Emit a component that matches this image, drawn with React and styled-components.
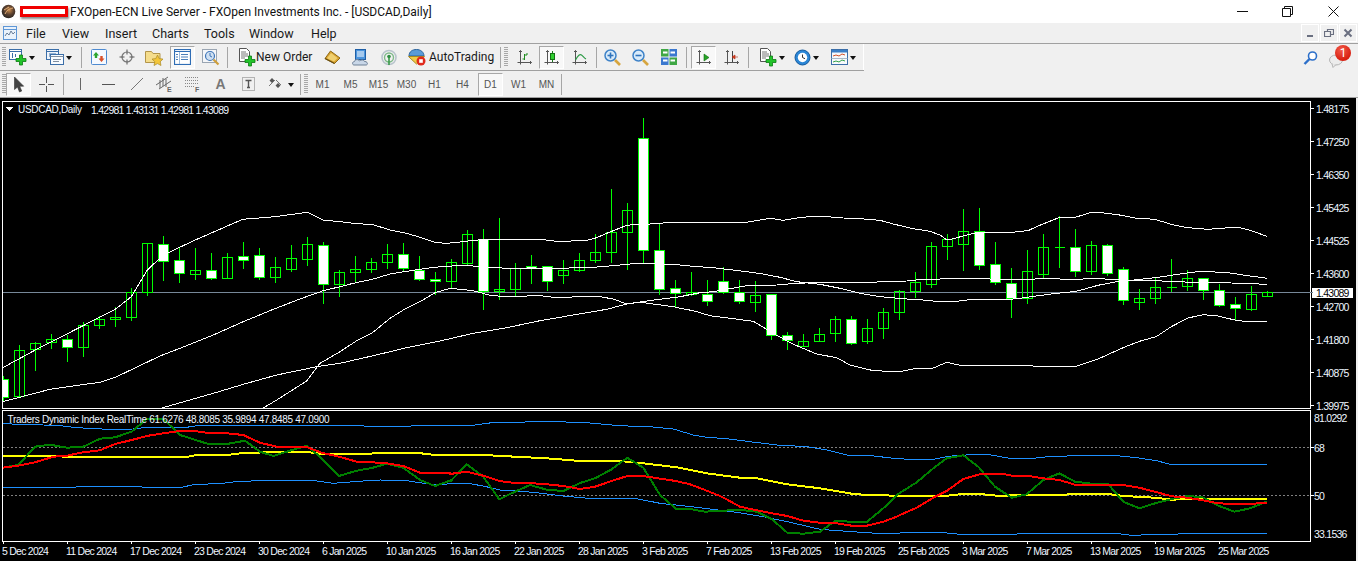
import React from 'react'
import styled, { createGlobalStyle } from 'styled-components'

const GlobalStyle = createGlobalStyle`
  html, body { margin: 0; padding: 0; background: #f0f0f0; overflow: hidden; }
  #root { width: 1358px; height: 561px; }
`

const UI_FONT = `Roboto, "Liberation Sans", sans-serif`
const CHART_FONT = `"Liberation Sans", Arial, sans-serif`

/* ---------- chart data (measured in thirds of a pixel, see at()) ---------- */

// high, body top, body bottom, low, white body
const CANDLES = [
  [825, 838, 892, 905, 1], [733, 751, 890, 890, 0], [723, 730, 748, 812, 0], [700, 719, 727, 746, 0],
  [703, 719, 742, 785, 1], [663, 676, 742, 770, 0], [646, 658, 676, 686, 0], [618, 652, 658, 678, 0],
  [562, 577, 652, 662, 0], [427, 430, 577, 585, 0], [406, 433, 484, 540, 1], [439, 482, 520, 548, 1],
  [441, 511, 523, 537, 0], [457, 511, 535, 539, 1], [457, 472, 535, 535, 0], [423, 469, 481, 506, 1],
  [441, 466, 532, 539, 1], [468, 502, 532, 548, 0], [433, 475, 508, 515, 0], [408, 433, 478, 497, 0],
  [423, 436, 553, 610, 1], [508, 517, 553, 590, 0], [465, 508, 517, 547, 0], [472, 487, 508, 518, 0],
  [430, 463, 487, 506, 0], [427, 463, 505, 510, 1], [465, 511, 538, 541, 1], [514, 538, 544, 584, 1],
  [475, 487, 544, 565, 0], [388, 403, 490, 496, 0], [385, 418, 575, 629, 1], [352, 568, 575, 598, 0],
  [487, 505, 568, 589, 0], [463, 499, 505, 551, 1], [496, 499, 544, 572, 1], [478, 511, 526, 551, 0],
  [457, 481, 511, 515, 0], [400, 457, 481, 488, 0], [265, 397, 457, 488, 0], [307, 331, 397, 509, 0],
  [52, 115, 451, 490, 1], [367, 451, 568, 584, 1], [538, 565, 580, 622, 1], [514, 577, 583, 587, 0],
  [538, 583, 604, 617, 1], [499, 544, 577, 580, 1], [538, 577, 604, 611, 1], [541, 586, 607, 635, 0],
  [583, 583, 706, 717, 1], [694, 706, 721, 749, 1], [700, 724, 739, 739, 0], [682, 703, 724, 724, 0],
  [646, 658, 700, 725, 0], [646, 658, 730, 734, 1], [655, 685, 724, 731, 0], [622, 637, 685, 716, 0],
  [568, 574, 637, 659, 0], [514, 547, 575, 593, 0], [424, 439, 553, 563, 0], [400, 418, 439, 479, 0],
  [325, 394, 433, 512, 0], [322, 394, 496, 509, 1], [424, 493, 547, 554, 1], [502, 550, 595, 653, 1],
  [448, 514, 594, 610, 0], [400, 442, 523, 532, 0], [346, 442, 442, 503, 0], [385, 442, 514, 530, 1],
  [421, 436, 514, 524, 0], [430, 436, 520, 527, 1], [499, 509, 601, 613, 1], [565, 595, 607, 629, 0],
  [532, 562, 595, 611, 0], [475, 562, 562, 575, 0], [508, 535, 559, 572, 0], [532, 535, 571, 599, 1],
  [550, 571, 616, 620, 1], [589, 613, 625, 660, 1], [556, 583, 628, 631, 0], [571, 577, 589, 590, 0],
]

const at = (x0, y0, pts) => pts.map(([x, y]) => [x0 + x / 3, y0 + y / 3])
const toPoints = pts => pts.map(([x, y]) => `${x.toFixed(1)},${y.toFixed(1)}`).join(' ')

const BAND_LINES = [
  [
    ...at(0, 100, [[8, 803], [106, 750], [346, 628], [394, 590], [442, 510], [490, 465], [586, 420], [682, 378], [728, 358], [824, 350], [922, 337], [970, 360], [1020, 365]]),
    ...at(340, 100, [[40, 370], [100, 374], [150, 390], [200, 400], [240, 412], [285, 427], [315, 430], [345, 428], [400, 421], [450, 418], [600, 418], [650, 424], [690, 424], [700, 421], [740, 421], [770, 413], [800, 400], [860, 376], [900, 372], [930, 372], [980, 368], [1020, 367]]),
    ...at(680, 100, [[200, 367], [240, 360], [270, 355], [310, 361], [350, 354], [400, 349], [440, 350], [490, 354], [540, 356], [600, 361], [640, 372], [700, 386], [750, 394], [780, 405], [800, 420], [820, 416], [850, 408], [880, 400], [920, 397], [1000, 397], [1020, 394]]),
    ...at(1018, 100, [[30, 392], [60, 378], [120, 354], [175, 351], [220, 337], [240, 337], [300, 344], [350, 354], [410, 358], [470, 376], [510, 383], [570, 388], [620, 384], [660, 382], [700, 392], [747, 409]]),
  ],
  [
    ...at(0, 100, [[8, 905], [150, 868], [240, 855], [300, 847], [350, 830], [480, 768], [540, 745], [640, 705], [730, 665], [820, 628], [900, 597], [970, 572], [1020, 560]]),
    ...at(340, 100, [[40, 550], [100, 537], [150, 522], [200, 514], [240, 508], [280, 502], [310, 500], [360, 496], [400, 498], [450, 502], [500, 505], [560, 505], [650, 507], [700, 503], [760, 502], [820, 497], [880, 491], [940, 490], [1020, 495]]),
    ...at(680, 100, [[40, 499], [100, 503], [200, 515], [250, 522], [300, 532], [350, 545], [420, 553], [480, 565], [540, 580], [600, 590], [680, 597], [730, 600], [780, 605], [820, 605], [860, 600], [1000, 597], [1020, 595]]),
    ...at(1018, 100, [[40, 590], [100, 582], [175, 574], [240, 556], [290, 546], [340, 541], [420, 532], [500, 520], [550, 514], [630, 518], [690, 527], [747, 535]]),
  ],
  [
    ...at(0, 100, [[485, 924], [640, 880], [730, 853], [830, 825], [950, 800], [1020, 790]]),
    ...at(340, 100, [[100, 767], [200, 743], [300, 723], [400, 700], [500, 683], [600, 662], [700, 645], [800, 628], [860, 612], [920, 603], [1020, 590]]),
    ...at(680, 100, [[60, 578], [100, 575], [150, 566], [200, 557], [290, 555], [350, 550], [400, 548], [580, 547], [600, 545], [680, 543], [730, 538], [830, 536], [1020, 538]]),
    ...at(1018, 100, [[100, 536], [150, 538], [240, 536], [330, 540], [400, 540], [440, 544], [560, 548], [640, 549], [747, 553]]),
  ],
  [
    ...at(0, 100, [[790, 924], [830, 900], [920, 843], [960, 790], [1020, 755]]),
    ...at(340, 100, [[50, 722], [95, 700], [150, 655], [195, 627], [240, 605], [285, 578], [330, 565], [400, 572], [450, 586], [500, 590], [550, 590], [570, 586], [600, 587], [650, 593], [690, 593], [700, 589], [780, 590], [820, 597], [860, 612], [900, 607], [940, 612], [1000, 620], [1020, 625]]),
    ...at(680, 100, [[40, 632], [90, 647], [150, 655], [220, 664], [250, 682], [290, 706], [340, 733], [410, 762], [470, 773], [510, 795], [580, 812], [660, 815], [700, 807], [760, 804], [800, 787], [840, 796], [1020, 796]]),
    ...at(1018, 100, [[60, 799], [175, 799], [240, 777], [320, 741], [370, 722], [415, 710], [460, 680], [510, 654], [555, 644], [600, 648], [650, 660], [680, 664], [747, 664]]),
  ],
]

const TDI_BLUE_TOP = [
  ...at(0, 405, [[8, 56], [130, 60], [180, 62], [230, 68], [325, 73], [400, 72], [440, 67], [560, 67], [590, 62], [1090, 62], [1095, 64], [1230, 64], [1235, 62], [1350, 62]]),
  ...at(450, 405, [[60, 62], [125, 53], [270, 50], [320, 50], [410, 53], [510, 62], [610, 66], [670, 72], [730, 90], [770, 97], [830, 101], [900, 110], [980, 120], [1070, 125], [1130, 135], [1200, 152], [1265, 152], [1330, 160]]),
  ...at(900, 405, [[25, 163], [100, 163], [135, 156], [170, 151], [260, 148], [330, 160], [400, 160], [455, 154], [550, 152], [650, 152], [710, 158], [770, 167], [810, 178], [1100, 178]]),
]
const TDI_BLUE_BOTTOM = [
  ...at(0, 405, [[8, 247], [225, 247], [230, 245], [420, 245], [440, 248], [545, 247], [580, 239], [670, 235], [705, 230], [800, 226], [935, 226], [1000, 235], [1090, 228], [1140, 225], [1220, 227], [1260, 233], [1310, 240], [1350, 236]]),
  ...at(450, 405, [[60, 236], [100, 243], [150, 255], [250, 262], [340, 273], [415, 280], [560, 281], [630, 295], [740, 307], [860, 322], [940, 335], [1020, 352], [1110, 373], [1190, 379], [1280, 385], [1340, 385]]),
  ...at(900, 405, [[25, 382], [120, 382], [170, 387], [350, 387], [360, 385], [645, 385], [695, 391], [790, 388], [935, 385], [1100, 385]]),
]
const TDI_YELLOW = [
  ...at(0, 405, [[8, 152], [160, 152], [200, 156], [560, 156], [590, 150], [680, 150], [730, 144], [830, 141], [920, 141], [960, 146], [1115, 146], [1120, 144], [1255, 144], [1305, 150], [1350, 150]]),
  ...at(450, 405, [[100, 150], [195, 155], [290, 160], [390, 168], [510, 168], [580, 175], [680, 187], [770, 205], [870, 218], [920, 220], [1012, 238], [1110, 250], [1205, 266], [1250, 270], [1340, 272]]),
  ...at(900, 405, [[140, 272], [190, 267], [240, 267], [290, 272], [430, 270], [575, 267], [625, 267], [670, 273], [765, 278], [815, 284], [905, 280], [955, 283], [1100, 283]]),
]
const TDI_GREEN = [
  ...at(0, 405, [[8, 188], [55, 180], [105, 125], [150, 119], [200, 128], [250, 125], [300, 101], [345, 97], [395, 80], [440, 42], [490, 42], [540, 90], [625, 117], [680, 117], [735, 107], [780, 140], [820, 153], [870, 137], [920, 122], [965, 160], [1017, 213], [1070, 197], [1115, 189], [1160, 176], [1210, 188], [1260, 225], [1305, 243], [1355, 225]]),
  ...at(450, 405, [[0, 230], [50, 178], [100, 215], [148, 283], [195, 260], [240, 240], [290, 254], [340, 258], [390, 234], [435, 220], [485, 193], [532, 158], [580, 188], [630, 270], [678, 311], [720, 312], [765, 320], [815, 317], [875, 315], [920, 320], [965, 342], [1012, 383], [1060, 386], [1110, 380], [1155, 348], [1205, 350], [1250, 351], [1300, 310], [1340, 270]]),
  ...at(900, 405, [[50, 232], [100, 190], [140, 160], [190, 151], [235, 185], [285, 245], [335, 278], [380, 268], [430, 225], [478, 205], [525, 230], [575, 236], [625, 238], [670, 290], [718, 310], [765, 295], [815, 282], [860, 274], [905, 275], [955, 302], [1003, 320], [1050, 310], [1100, 290]]),
]
const TDI_RED = [
  ...at(0, 405, [[8, 188], [55, 182], [105, 172], [160, 155], [200, 152], [250, 142], [300, 136], [345, 117], [395, 105], [445, 92], [490, 85], [540, 78], [585, 78], [625, 84], [680, 85], [730, 90], [780, 113], [830, 125], [920, 126], [965, 143], [1017, 155], [1070, 170], [1115, 172], [1160, 175], [1210, 183], [1260, 203], [1305, 205], [1350, 205]]),
  ...at(450, 405, [[0, 207], [50, 200], [100, 212], [148, 228], [195, 234], [240, 234], [290, 238], [340, 243], [390, 252], [435, 245], [485, 228], [532, 213], [580, 213], [630, 221], [678, 228], [720, 238], [765, 255], [815, 275], [870, 305], [920, 316], [965, 325], [1012, 333], [1060, 347], [1110, 353], [1155, 354], [1205, 362], [1250, 362], [1300, 350], [1340, 335]]),
  ...at(900, 405, [[0, 330], [50, 308], [100, 278], [140, 258], [190, 222], [245, 206], [305, 206], [335, 212], [380, 212], [430, 220], [478, 225], [525, 239], [575, 240], [670, 240], [718, 248], [765, 260], [815, 274], [860, 278], [905, 285], [955, 295], [1003, 297], [1050, 297], [1100, 293]]),
]

const PRICES = ['1.48175', '1.47250', '1.46350', '1.45425', '1.44525', '1.43600', '1.42700', '1.41800', '1.40875', '1.39975']
const DATES = ['5 Dec 2024', '11 Dec 2024', '17 Dec 2024', '23 Dec 2024', '30 Dec 2024', '6 Jan 2025', '10 Jan 2025', '16 Jan 2025', '22 Jan 2025', '28 Jan 2025', '3 Feb 2025', '7 Feb 2025', '13 Feb 2025', '19 Feb 2025', '25 Feb 2025', '3 Mar 2025', '7 Mar 2025', '13 Mar 2025', '19 Mar 2025', '25 Mar 2025']

/* ---------- page frame ---------- */

const Window = styled.div`
  width: 1358px;
  height: 561px;
  display: flex;
  flex-direction: column;
  overflow: hidden;
  background: #f0f0f0;
`

const TitleBar = styled.div`
  height: 23px;
  background: #fff;
  display: flex;
  align-items: center;
  font: 12px ${UI_FONT};
  color: #111;
`

const Redacted = styled.div`
  width: 48px;
  height: 11px;
  margin: 0 2px 0 4px;
  box-sizing: border-box;
  background: #fff;
  border: 3px solid #f00000;
  box-shadow: 1px 2px 2px rgba(0, 0, 0, 0.45);
`

const TitleText = styled.span`
  white-space: nowrap;
`

const Caption = styled.div`
  margin-left: auto;
  padding-right: 2px;
  display: flex;
`

const CaptionButton = styled.div`
  width: 45.5px;
  height: 23px;
  display: flex;
  align-items: center;
  justify-content: center;
`

const MenuBar = styled.div`
  height: 20px;
  border-bottom: 1px solid #a0a0a0;
  display: flex;
  align-items: center;
  font: 12.5px ${UI_FONT};
  color: #1a1a1a;
`

const MenuLogo = styled.div`
  width: 26px;
  flex: none;
  box-sizing: border-box;
  padding-left: 2px;
`

const MenuItem = styled.span`
  width: ${p => p.$w}px;
  flex: none;
`

const MdiButtons = styled.div`
  margin-left: auto;
  display: flex;
  gap: 1px;
  padding-right: 1px;
`

const MdiButton = styled.div`
  width: 18px;
  height: 18px;
  box-sizing: border-box;
  border: 1px solid #fff;
  display: flex;
  align-items: center;
  justify-content: center;
`

const ToolRow = styled.div`
  height: 27px;
  display: flex;
  flex: none;
`

const Toolbar = styled.div`
  width: ${p => p.$w}px;
  box-sizing: border-box;
  display: flex;
  align-items: center;
  border-bottom: 1px solid #a0a0a0;
  box-shadow: inset -1px 0 0 #fff;
`

const Tray = styled.div`
  flex: 1;
  display: flex;
  justify-content: flex-end;
  align-items: center;
  gap: 11px;
  padding-right: 13px;
`

const Bubble = styled.div`
  position: relative;
  width: 16px;
  height: 14px;
  margin-top: 6px;
`

const Badge = styled.span`
  position: absolute;
  top: -9px;
  left: 6px;
  width: 16px;
  height: 16px;
  border-radius: 50%;
  background: radial-gradient(circle at 40% 30%, #f25a4a, #d81f10 70%);
  color: #fff;
  font: 12px/16px ${UI_FONT};
  text-align: center;
`

const Row2 = styled.div`
  height: 27px;
  flex: none;
  box-sizing: border-box;
  border-bottom: 1px solid #a0a0a0;
  display: flex;
  align-items: center;
`

const Grip = styled.div`
  width: 4px;
  height: 20px;
  flex: none;
  margin-left: ${p => p.$ml ?? 2}px;
  background: repeating-linear-gradient(to bottom, #a8a8a8 0 1px, transparent 1px 2px);
`

const Sep = styled.div`
  width: 1px;
  height: 21px;
  flex: none;
  margin-left: ${p => p.$ml ?? 4}px;
  background: #a6a6a6;
`

const Btn = styled.div`
  width: ${p => p.$w ?? 25}px;
  height: 23px;
  flex: none;
  box-sizing: border-box;
  margin-left: ${p => p.$ml ?? 3}px;
  display: flex;
  align-items: center;
  justify-content: center;
  ${p => p.$on && `
    background: #f8f8f8;
    border: 1px solid;
    border-color: #a8a8a8 #fff #fff #a8a8a8;
  `}
`

const DropBtn = styled.div`
  width: 31px;
  height: 23px;
  flex: none;
  margin-left: ${p => p.$ml ?? 3}px;
  display: flex;
  align-items: center;
  gap: 2px;
`

const Caret = styled.span`
  width: 0;
  height: 0;
  border: 3.5px solid transparent;
  border-top: 4px solid #111;
  border-bottom: 0;
  margin-top: 1px;
`

const TextBtn = styled.div`
  width: ${p => p.$w}px;
  height: 23px;
  flex: none;
  box-sizing: border-box;
  margin-left: ${p => p.$ml ?? 3}px;
  padding-left: 4px;
  display: flex;
  align-items: center;
  gap: ${p => p.$gap ?? 3}px;
  font: 12px ${UI_FONT};
  color: #1a1a1a;
  white-space: nowrap;
`

const Period = styled(Btn)`
  font: 10px ${CHART_FONT};
  color: #555;
`

const DrawLetter = styled.span`
  font: bold 14px ${CHART_FONT};
  color: #777;
`

const ChartArea = styled.div`
  flex: 1;
  width: 1356px;
  padding-top: 3px;
  background: #000;
  overflow: hidden;
`

const Pane = styled.svg`
  display: block;
  width: 1356px;
  height: ${p => p.$h}px;
`

const Label = styled.text`
  font: 10.5px ${CHART_FONT};
  letter-spacing: -0.75px;
  fill: ${p => p.$dark ? '#000' : '#eef6ff'};
  dominant-baseline: central;
`

const Heading = styled(Label)`
  letter-spacing: -0.3px;
  font-size: 10px;
`

/* ---------- icons ---------- */

const Ico = styled.svg`
  display: block;
  flex: none;
`

const Icon = ({ w = 18, h = 18, children }) => (
  <Ico width={w} height={h} viewBox={`0 0 ${w} ${h}`}>{children}</Ico>
)

const Plus = ({ x = 7, y = 7 }) => (
  <path transform={`translate(${x} ${y})`} d="M4 .5h3v3.5h3.5v3H7v3.5H4V7H.5V4H4z" fill="#22c32a" stroke="#0b7a12" strokeWidth="0.8" />
)

const AppIcon = () => (
  <Ico width="15" height="15" viewBox="0 0 15 15" style={{ marginLeft: 1 }}>
    <defs>
      <radialGradient id="appball" cx="55%" cy="40%" r="60%">
        <stop offset="0" stopColor="#c98a4a" />
        <stop offset="0.55" stopColor="#5b4130" />
        <stop offset="1" stopColor="#2a2622" />
      </radialGradient>
    </defs>
    <circle cx="7.5" cy="7.5" r="6.8" fill="url(#appball)" />
    <path d="M4 10c2-4 4-5 8-6M3 6c2-1 3-2 5-3" stroke="#e7b27a" strokeWidth="1" fill="none" />
  </Ico>
)

const ChartsMenuIcon = () => (
  <Icon w={16} h={16}>
    <rect x="1.5" y="1.5" width="13" height="13" fill="#eaf2fb" stroke="#5f97d6" />
    <path d="M1.5 4.5h13" stroke="#5f97d6" />
    <path d="M3 11l2-3 2 2 2-4 2 3 2-2" stroke="#6a7f99" fill="none" />
  </Icon>
)

const NewChartIcon = () => (
  <Icon>
    <rect x="0.5" y="1.5" width="12" height="10" fill="#fff" stroke="#3b6ea8" />
    <path d="M0.5 3.5h12" stroke="#3b6ea8" />
    <path d="M3.5 5v5M6.5 6v3" stroke="#3b6ea8" />
    <Plus x={6.5} y={6.5} />
  </Icon>
)

const ProfilesIcon = () => (
  <Icon>
    <rect x="0.5" y="1.5" width="12" height="10" fill="#eef3fa" stroke="#3b6ea8" />
    <path d="M0.5 3.5h12M3 6h7M3 8h5" stroke="#3b6ea8" />
    <rect x="4.5" y="6.5" width="13" height="10" fill="#f8fbff" stroke="#3b6ea8" />
    <path d="M4.5 8.5h13M7 11.5h8M7 13.5h6" stroke="#7f8ea0" />
  </Icon>
)

const MarketWatchIcon = () => (
  <Icon w={16} h={16}>
    <rect x="0.5" y="0.5" width="15" height="15" rx="1" fill="#f5f9ff" stroke="#4e8ad0" />
    <path d="M5 3l3 3.5H6.2V9H3.8V6.5H2z" fill="#2da52d" />
    <path d="M10.5 13l3-3.5h-1.8V7H9.3v2.5H7.5z" fill="#d9502a" />
  </Icon>
)

const CrosshairIcon = () => (
  <Icon w={16} h={16}>
    <circle cx="8" cy="8" r="5" fill="none" stroke="#777" strokeWidth="1.2" />
    <path d="M8 0.5v5M8 10.5v5M0.5 8h5M10.5 8h5" stroke="#555" />
  </Icon>
)

const NavigatorIcon = () => (
  <Icon w={19} h={18}>
    <path d="M0.5 3.5h6l1.5 2h7v9h-14.5z" fill="#f5dd8c" stroke="#b3954a" />
    <path d="M12.5 7l1.7 3.6 3.8.5-2.8 2.6.8 3.8-3.5-1.9-3.5 1.9.8-3.8-2.8-2.6 3.8-.5z" fill="#f3c63a" stroke="#a98a2a" strokeWidth="0.7" />
  </Icon>
)

const TerminalIcon = () => (
  <Icon w={17} h={16}>
    <rect x="0.5" y="0.5" width="16" height="15" fill="#fff" stroke="#2f6db5" strokeWidth="1.2" />
    <path d="M0.5 2.5h16" stroke="#2f6db5" />
    <path d="M5.5 3v12" stroke="#9bbbdf" />
    <path d="M2 5.5h2M2 8h2M2 10.5h2M7 5.5h7M7 8h7M7 10.5h7" stroke="#4d7fb8" />
  </Icon>
)

const TesterIcon = () => (
  <Icon>
    <rect x="0.5" y="1.5" width="14" height="13" fill="#f4f6f9" stroke="#9aa5b2" />
    <circle cx="8" cy="8" r="4.5" fill="#cfe0f2" stroke="#3f76b8" strokeWidth="1.2" />
    <path d="M8 5v3l2 1" stroke="#3f76b8" fill="none" />
    <path d="M11.5 11.5l5 5" stroke="#cf9f3c" strokeWidth="2.2" />
  </Icon>
)

const NewOrderIcon = () => (
  <Icon w={19} h={19}>
    <path d="M2.5 0.5h7l3 3v10h-10z" fill="#fff" stroke="#555" />
    <path d="M4 4h5M4 6h7M4 8h7M4 10h4" stroke="#777" />
    <Plus x={7.5} y={7.5} />
  </Icon>
)

const BookIcon = () => (
  <Icon w={17} h={16}>
    <path d="M1 9.5L6.5 2 16 9l-5.5 5.5z" fill="#d9a32f" stroke="#8f6a16" />
    <path d="M3 9.2l4-5.2 6.5 5-3.5 3.4z" fill="#f0d070" />
    <path d="M1 9.5l9.5 5" stroke="#6b5012" fill="none" strokeWidth="1.2" />
  </Icon>
)

const OptionsIcon = () => (
  <Icon w={17} h={17}>
    <rect x="3.5" y="0.5" width="10" height="10" fill="#4c95dd" stroke="#1f5fa6" />
    <path d="M5 3h7M5 5h7M5 7h7" stroke="#fff" />
    <path d="M2 16c-2 0-2-3.5.5-3.5 .5-2.5 4-2.5 5-.5 1.5-1.5 4.5-1.5 5 .5 3 -.5 4 3.5 1.5 3.5z" fill="#c9d7e8" stroke="#6f8197" />
  </Icon>
)

const SignalIcon = () => (
  <Icon w={16} h={17}>
    <circle cx="8" cy="8.5" r="7" fill="none" stroke="#b8c4cc" strokeWidth="1.6" />
    <circle cx="8" cy="8.5" r="4.5" fill="none" stroke="#7fb98a" strokeWidth="1.4" />
    <path d="M8 8v8" stroke="#3a9a4a" strokeWidth="1.6" />
    <circle cx="8" cy="7.5" r="1.8" fill="#2f8f43" />
  </Icon>
)

const AutoTradingIcon = () => (
  <Icon w={18} h={18}>
    <path d="M1 8c0-4.5 3.5-6.5 7.5-6.5S16 4 16 8z" fill="#5a9bd6" stroke="#2b639c" />
    <path d="M0.5 8.5h16L8.5 16z" fill="#f0cc47" stroke="#a88a20" />
    <circle cx="13" cy="13" r="4.5" fill="#e02a1c" />
    <rect x="11.2" y="11.2" width="3.6" height="3.6" fill="#fff" />
  </Icon>
)

const Axes = () => (
  <path d="M3.5 0.5v14M0.5 12.5h14M2 2l1.5-1.5L5 2M13 11l1.5 1.5-1.5 1.5" fill="none" stroke="#555" />
)

const BarChartIcon = () => (
  <Icon w={15} h={15}><Axes /><path d="M7.5 4v6M7.5 9H5.5M7.5 5h2.5V3" stroke="#1d8a1d" fill="none" /></Icon>
)

const CandleChartIcon = () => (
  <Icon w={15} h={15}><Axes /><path d="M8.5 1v11" stroke="#1d7a1d" /><rect x="6.5" y="3.5" width="4" height="6" fill="#2fd02f" stroke="#157015" /></Icon>
)

const LineChartIcon = () => (
  <Icon w={15} h={15}><Axes /><path d="M3.5 10C6 5 8 4 9.5 5s2.5 3 4.5 4" stroke="#2a9a44" fill="none" strokeWidth="1.2" /></Icon>
)

const ZoomIcon = ({ plus }) => (
  <Icon w={17} h={17}>
    <circle cx="6.5" cy="6.5" r="5.5" fill="#d9ebfa" stroke="#3f83c8" strokeWidth="1.5" />
    <path d="M3.5 6.5h6" stroke="#2f74bd" strokeWidth="1.6" />
    {plus && <path d="M6.5 3.5v6" stroke="#2f74bd" strokeWidth="1.6" />}
    <path d="M11 11l5 5" stroke="#d6a53f" strokeWidth="2.6" />
  </Icon>
)

const TileIcon = () => (
  <Icon w={16} h={16}>
    <rect x="0" y="0" width="8" height="8" fill="#3fa745" />
    <rect x="8" y="0" width="8" height="8" fill="#3b78cf" />
    <rect x="0" y="8" width="8" height="8" fill="#3b78cf" />
    <rect x="8" y="8" width="8" height="8" fill="#3fa745" />
    <path d="M2 3.5h4.5M9.5 3.5h4.5M2 11.5h4.5M9.5 11.5h4.5" stroke="#fff" strokeWidth="2" />
    <path d="M0 8h16M8 0v16" stroke="#e8eef5" />
  </Icon>
)

const AutoScrollIcon = () => (
  <Icon w={15} h={15}><Axes /><path d="M8 4l5 3.5L8 11z" fill="#26a326" stroke="#126d12" strokeWidth="0.6" /></Icon>
)

const ChartShiftIcon = () => (
  <Icon w={15} h={15}><Axes /><path d="M8.5 1v11" stroke="#444" /><path d="M14 7H11V5L8 7l3 2V7" fill="#d43c1c" stroke="#b32a10" strokeWidth="0.6" /></Icon>
)

const ClockIcon = () => (
  <Icon w={17} h={17}>
    <circle cx="8.5" cy="8.5" r="7.5" fill="#2a86d6" stroke="#13599c" />
    <circle cx="8.5" cy="8.5" r="4.7" fill="#fff" />
    <path d="M8.5 5.5v3l2.5 1.2" stroke="#333" fill="none" />
  </Icon>
)

const TemplatesIcon = () => (
  <Icon w={17} h={16}>
    <rect x="0.5" y="0.5" width="16" height="15" fill="#f7f9fc" stroke="#3b6ea8" />
    <rect x="1" y="1" width="15" height="2.5" fill="#3b7fc7" />
    <path d="M0.5 9.5h16" stroke="#a9b8c8" />
    <path d="M2 7l3-1 3 1 3-2 3 1" stroke="#d2522a" fill="none" />
    <path d="M2 13l3-1 3 1 3-2 3 1" stroke="#34a24a" fill="none" />
  </Icon>
)

const CursorIcon = () => (
  <Icon w={12} h={17}><path d="M1.5 1v12.5l3-2.5 2 5 2.2-1-2-4.8h4z" fill="#444" stroke="#333" strokeWidth="0.6" /></Icon>
)

const CrossIcon = () => (
  <Icon w={15} h={15}><path d="M7.5 0v6M7.5 9v6M0 7.5h6M9 7.5h6" stroke="#555" /></Icon>
)

const VLineIcon = () => <Icon w={3} h={14}><path d="M1.5 1v12" stroke="#666" /></Icon>
const HLineIcon = () => <Icon w={13} h={3}><path d="M0 1.5h13" stroke="#555" /></Icon>
const TrendIcon = () => <Icon w={14} h={14}><path d="M1 13L13 1" stroke="#777" /></Icon>

const ChannelIcon = () => (
  <Icon h={16}>
    <path d="M0 9L12 1M3 13L15 5M4 4v8M7 2v8M10 3v8" stroke="#666" fill="none" />
    <text x="11" y="15.5" fontSize="7" fontWeight="bold" fontFamily="Liberation Sans" fill="#666">E</text>
  </Icon>
)

const FiboIcon = () => (
  <Icon w={15} h={16}>
    <path d="M0 1.5h13M0 4.5h13M0 7.5h13M0 10.5h9" stroke="#888" strokeDasharray="1 1" />
    <text x="10" y="15.5" fontSize="7" fontWeight="bold" fontFamily="Liberation Sans" fill="#666">F</text>
  </Icon>
)

const TextBoxIcon = () => (
  <Icon w={13} h={14}>
    <rect x="0.5" y="0.5" width="12" height="13" fill="none" stroke="#777" strokeDasharray="1 1" />
    <path d="M3.5 3.5h6M6.5 3.5v7M5 10.5h3" stroke="#555" strokeWidth="1.4" />
  </Icon>
)

const ShapesIcon = () => (
  <Icon w={18} h={15}>
    <path d="M4 1l2.5 2.5L4 6 1.5 3.5zM10 6l2.5 2.5L10 11 7.5 8.5z" fill="#555" />
    <path d="M1 9l6-6M8 3l5 5" stroke="#777" />
  </Icon>
)

const SearchIcon = () => (
  <Icon w={15} h={14}>
    <circle cx="9.5" cy="5" r="4" fill="#fff" stroke="#2c6fc9" strokeWidth="1.6" />
    <path d="M6.5 8L1.5 13" stroke="#2c6fc9" strokeWidth="2.4" />
  </Icon>
)

const SpeechIcon = () => (
  <Icon w={16} h={14}>
    <ellipse cx="7" cy="6" rx="6.5" ry="5" fill="#ececec" stroke="#b5b5b5" />
    <path d="M3 10l1 3.5 3-3" fill="#ececec" stroke="#b5b5b5" />
  </Icon>
)

/* ---------- chart panes ---------- */

const Candle = ({ index, high, top, bottom, low, white }) => {
  const x = 3 + 16 * index
  const row = v => Math.floor(100 + v / 3) + 0.5
  const y0 = row(top)
  const y1 = row(bottom)
  return (
    <g>
      <path d={`M${x + 0.5} ${row(high)}V${row(low)}`} stroke="#00ff00" />
      <path d={`M${x - 4.5} ${y0}h10V${y1}h-10z`} fill={white ? '#fff' : 'none'} stroke="#00ff00" />
    </g>
  )
}

const MainPane = () => (
  <Pane $h={309} viewBox="0 101 1356 309" shapeRendering="crispEdges">
    <defs>
      <clipPath id="mainplot"><rect x="3" y="102" width="1307" height="306" /></clipPath>
    </defs>
    <g clipPath="url(#mainplot)">
      <path d="M3 292.5H1310" stroke="#778899" />
      {CANDLES.map((c, i) => (
        <Candle key={i} index={i} high={c[0]} top={c[1]} bottom={c[2]} low={c[3]} white={c[4]} />
      ))}
      {BAND_LINES.map((pts, i) => (
        <polyline key={i} points={toPoints(pts)} fill="none" stroke="#fff" />
      ))}
    </g>
    <rect x="2.5" y="101.5" width="1308" height="307" fill="none" stroke="#fff" />
    {PRICES.map((p, i) => {
      const y = 108 + 33 * i
      return (
        <g key={p}>
          <path d={`M1311 ${y + 0.5}h3`} stroke="#fff" />
          <Label x="1316" y={y + 0.5}>{p}</Label>
        </g>
      )
    })}
    <rect x="1312" y="288" width="41" height="10" fill="#fff" />
    <path d="M1310 292.5h3" stroke="#778899" />
    <Label x="1316" y="293" $dark>1.43089</Label>
    <path d="M6 107h7l-3.5 4z" fill="#fff" />
    <Heading x="18" y="109.5">USDCAD,Daily</Heading>
    <Label x="91" y="109.5">1.42981 1.43131 1.42981 1.43089</Label>
  </Pane>
)

const IndicatorPane = () => (
  <Pane $h={132} viewBox="0 410 1356 132" shapeRendering="crispEdges">
    <defs>
      <clipPath id="subplot"><rect x="3" y="411" width="1307" height="130" /></clipPath>
    </defs>
    <g clipPath="url(#subplot)">
      <path d="M3 447.5H1310M3 495.5H1310" stroke="#808080" strokeDasharray="2 2" />
      <polyline points={toPoints(TDI_BLUE_TOP)} fill="none" stroke="#1e90ff" />
      <polyline points={toPoints(TDI_BLUE_BOTTOM)} fill="none" stroke="#1e90ff" />
      <polyline points={toPoints(TDI_YELLOW)} fill="none" stroke="#ffff00" strokeWidth="2" />
      <polyline points={toPoints(TDI_GREEN)} fill="none" stroke="#008000" strokeWidth="2" />
      <polyline points={toPoints(TDI_RED)} fill="none" stroke="#ff0000" strokeWidth="2" />
    </g>
    <rect x="2.5" y="410.5" width="1308" height="131" fill="none" stroke="#fff" />
    <path d="M1311 447.5h3M1311 495.5h3" stroke="#fff" />
    <Label x="1314" y="418">81.0292</Label>
    <Label x="1314" y="447.5">68</Label>
    <Label x="1314" y="495.5">50</Label>
    <Label x="1314" y="534">33.1536</Label>
    <Heading x="7.5" y="419.5">Traders Dynamic Index RealTime 61.6276 48.8085 35.9894 47.8485 47.0900</Heading>
  </Pane>
)

const TimeAxis = () => (
  <Pane $h={19} viewBox="0 542 1356 19" shapeRendering="crispEdges">
    {DATES.map((d, i) => {
      const x = 3 + 64 * i
      return (
        <g key={d}>
          <path d={`M${x + 0.5} 542v2`} stroke="#fff" />
          <Label x={x - 1} y="551">{d}</Label>
        </g>
      )
    })}
  </Pane>
)

/* ---------- page ---------- */

const App = () => (
  <>
    <GlobalStyle />
    <Window>
      <TitleBar>
        <AppIcon />
        <Redacted />
        <TitleText>FXOpen-ECN Live Server - FXOpen Investments Inc. - [USDCAD,Daily]</TitleText>
        <Caption>
          <CaptionButton>
            <Icon w={11} h={11}><path d="M0 5.5h11" stroke="#111" /></Icon>
          </CaptionButton>
          <CaptionButton>
            <Icon w={11} h={11}><path d="M0.5 2.5h8v8h-8zM2.5 2.5v-2h8v8h-2" fill="none" stroke="#111" /></Icon>
          </CaptionButton>
          <CaptionButton>
            <Icon w={11} h={11}><path d="M0.5 0.5l10 10M10.5 0.5l-10 10" stroke="#111" /></Icon>
          </CaptionButton>
        </Caption>
      </TitleBar>

      <MenuBar>
        <MenuLogo><ChartsMenuIcon /></MenuLogo>
        <MenuItem $w={36}>File</MenuItem>
        <MenuItem $w={43}>View</MenuItem>
        <MenuItem $w={47}>Insert</MenuItem>
        <MenuItem $w={52}>Charts</MenuItem>
        <MenuItem $w={45}>Tools</MenuItem>
        <MenuItem $w={62}>Window</MenuItem>
        <MenuItem $w={40}>Help</MenuItem>
        <MdiButtons>
          <MdiButton><Icon w={10} h={10}><path d="M2 8h6" stroke="#6a6f80" strokeWidth="2" /></Icon></MdiButton>
          <MdiButton><Icon w={10} h={10}><path d="M0.5 3.5h6v5h-6zM3.5 3V1.5h6v5H7" fill="none" stroke="#6a6f80" strokeWidth="1.2" /></Icon></MdiButton>
          <MdiButton><Icon w={10} h={10}><path d="M1.5 1.5l7 7M8.5 1.5l-7 7" stroke="#6a6f80" strokeWidth="2" /></Icon></MdiButton>
        </MdiButtons>
      </MenuBar>

      <ToolRow>
        <Toolbar $w={864}>
          <Grip />
          <DropBtn><NewChartIcon /><Caret /></DropBtn>
          <DropBtn $ml={6}><ProfilesIcon /><Caret /></DropBtn>
          <Sep />
          <Btn $ml={4}><MarketWatchIcon /></Btn>
          <Btn><CrosshairIcon /></Btn>
          <Btn><NavigatorIcon /></Btn>
          <Btn $on><TerminalIcon /></Btn>
          <Btn><TesterIcon /></Btn>
          <Sep />
          <TextBtn $w={85} $ml={5} $gap={0}><NewOrderIcon />New Order</TextBtn>
          <Btn $ml={2}><BookIcon /></Btn>
          <Btn><OptionsIcon /></Btn>
          <Btn><SignalIcon /></Btn>
          <TextBtn $w={94}><AutoTradingIcon />AutoTrading</TextBtn>
          <Sep $ml={2} />
          <Grip $ml={3} />
          <Btn $ml={4}><BarChartIcon /></Btn>
          <Btn $ml={2} $on><CandleChartIcon /></Btn>
          <Btn><LineChartIcon /></Btn>
          <Sep />
          <Btn><ZoomIcon plus /></Btn>
          <Btn><ZoomIcon /></Btn>
          <Btn><TileIcon /></Btn>
          <Sep $ml={5} />
          <Btn $ml={4} $on><AutoScrollIcon /></Btn>
          <Btn><ChartShiftIcon /></Btn>
          <Sep />
          <DropBtn $ml={9}><NewOrderIcon /><Caret /></DropBtn>
          <DropBtn $ml={5}><ClockIcon /><Caret /></DropBtn>
          <DropBtn $ml={6}><TemplatesIcon /><Caret /></DropBtn>
        </Toolbar>
        <Tray>
          <SearchIcon />
          <Bubble>
            <SpeechIcon />
            <Badge>1</Badge>
          </Bubble>
        </Tray>
      </ToolRow>

      <Row2>
        <Grip />
        <Btn $ml={0} $on><CursorIcon /></Btn>
        <Btn><CrossIcon /></Btn>
        <Sep />
        <Btn $ml={4}><VLineIcon /></Btn>
        <Btn><HLineIcon /></Btn>
        <Btn><TrendIcon /></Btn>
        <Btn><ChannelIcon /></Btn>
        <Btn><FiboIcon /></Btn>
        <Btn><DrawLetter>A</DrawLetter></Btn>
        <Btn><TextBoxIcon /></Btn>
        <DropBtn $ml={7}><ShapesIcon /><Caret /></DropBtn>
        <Sep $ml={1} />
        <Grip $ml={3} />
        <Period $ml={2}>M1</Period>
        <Period>M5</Period>
        <Period>M15</Period>
        <Period>M30</Period>
        <Period>H1</Period>
        <Period>H4</Period>
        <Period $on>D1</Period>
        <Period>W1</Period>
        <Period>MN</Period>
        <Sep $ml={2} />
      </Row2>

      <ChartArea>
        <MainPane />
        <IndicatorPane />
        <TimeAxis />
      </ChartArea>
    </Window>
  </>
)

export default App
